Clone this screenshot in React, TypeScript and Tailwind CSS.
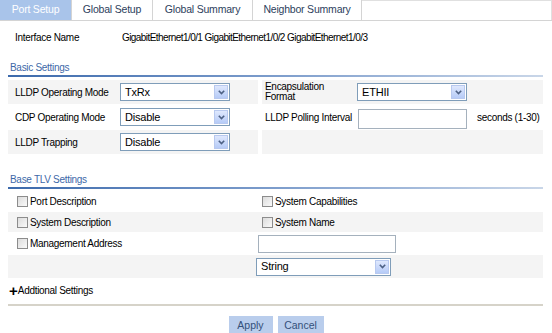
import React from "react";

const font = { fontFamily: '"Liberation Sans", Arial, sans-serif' };

function Select({ value, w }: { value: string; w: number }) {
  return (
    <div
      className="flex h-[18px] items-center border border-[#7f9db9] bg-white"
      style={{ width: w }}
    >
      <span className="flex-1 pl-[4px] text-[11px] leading-none tracking-[-0.2px] text-black">{value}</span>
      <div className="mr-[1px] flex h-[14px] w-[14px] items-center justify-center border border-[#b8c9ef] bg-gradient-to-b from-[#dfe8fd] to-[#b6cbf7]">
        <svg width="7" height="5" viewBox="0 0 7 5">
          <path d="M0.8 0.8 L3.5 3.6 L6.2 0.8" fill="none" stroke="#4d6185" strokeWidth="1.6" />
        </svg>
      </div>
    </div>
  );
}

function Check({ label }: { label: string }) {
  return (
    <div className="flex items-center">
      <div className="h-[11px] w-[11px] border border-[#8c8c8c] bg-gradient-to-br from-[#dcdcdc] to-[#fafafa]" />
      <span className="ml-[2px] text-[10px] tracking-[-0.3px] text-black">{label}</span>
    </div>
  );
}

function SectionTitle({ title }: { title: string }) {
  return (
    <div className="ml-[8px] mr-[9px]">
      <div className="pl-[2px] text-[10px] leading-[12px] tracking-[-0.3px] text-[#3d68a8]">{title}</div>
      <div className="mt-[1px] h-[2px] bg-gradient-to-r from-[#3c6aac] via-[#7d9dcc] to-[#c9d6e8]" />
    </div>
  );
}

export default function App() {
  const tabs = [
    { t: "Port Setup", w: 72 },
    { t: "Global Setup", w: 81 },
    { t: "Global Summary", w: 100 },
    { t: "Neighbor Summary", w: 109 },
  ];
  const gray = "bg-[#f4f4f4]";
  return (
    <div className="h-[333px] w-[552px] overflow-hidden bg-white text-[10px] text-black" style={font}>
      {/* tabs */}
      <div className="flex h-[21px] border-b border-[#d4d4d4]">
        {tabs.map((x, i) => (
          <div
            key={x.t}
            className={`flex items-center justify-center border-r border-[#d4d4d4] text-[10.5px] tracking-[-0.2px] ${
              i === 0 ? "bg-[#a9c4ea] text-white" : "bg-white text-[#2c3e5c]"
            }`}
            style={{ width: x.w }}
          >
            {x.t}
          </div>
        ))}
        <div className="flex-1 border-r border-t border-[#e0e0e0]" />
      </div>

      {/* interface name */}
      <div className="mt-[10px] flex h-[12px] items-center text-[10px] tracking-[-0.3px]">
        <span className="ml-[15px] w-[107px]">Interface Name</span>
        <span className="tracking-[-0.57px]">GigabitEthernet1/0/1 GigabitEthernet1/0/2 GigabitEthernet1/0/3</span>
      </div>

      <div className="mt-[19px]">
        <SectionTitle title="Basic Settings" />
      </div>

      {/* basic settings table */}
      <div className="ml-[8px] mr-[9px] mt-[3px] flex flex-col gap-[1px] text-[10px] tracking-[-0.3px]">
        <div className="flex h-[24px] gap-[4px]">
          <div className={`flex w-[250px] items-center ${gray}`}>
            <span className="w-[112px] pl-[7px]">LLDP Operating Mode</span>
            <Select value="TxRx" w={110} />
          </div>
          <div className={`flex flex-1 items-center ${gray}`}>
            <span className="w-[95px] pl-[3px] leading-[10px]">
              Encapsulation
              <br />
              Format
            </span>
            <Select value="ETHII" w={110} />
          </div>
        </div>
        <div className="flex h-[24px] gap-[4px]">
          <div className="flex w-[250px] items-center">
            <span className="w-[112px] pl-[7px]">CDP Operating Mode</span>
            <Select value="Disable" w={110} />
          </div>
          <div className="flex flex-1 items-center">
            <span className="w-[96px] pl-[3px]">LLDP Polling Interval</span>
            <div className="mt-[3px] h-[20px] w-[109px] border border-[#a5b1bd] bg-white" />
            <span className="ml-[10px]">seconds (1-30)</span>
          </div>
        </div>
        <div className="flex h-[24px] gap-[4px]">
          <div className={`flex w-[250px] items-center ${gray}`}>
            <span className="w-[112px] pl-[7px]">LLDP Trapping</span>
            <Select value="Disable" w={110} />
          </div>
          <div className={`flex-1 ${gray}`} />
        </div>
      </div>

      <div className="mt-[20px]">
        <SectionTitle title="Base TLV Settings" />
      </div>

      {/* TLV table */}
      <div className="ml-[8px] mr-[9px] mt-[2px] flex flex-col gap-[1px]">
        <div className="flex h-[20px] gap-[2px]">
          <div className="flex w-[244px] items-center pl-[9px]">
            <Check label="Port Description" />
          </div>
          <div className="flex flex-1 items-center pl-[8px]">
            <Check label="System Capabilities" />
          </div>
        </div>
        <div className={`flex h-[20px] gap-[2px] ${gray}`}>
          <div className="flex w-[244px] items-center pl-[9px]">
            <Check label="System Description" />
          </div>
          <div className="flex flex-1 items-center pl-[8px]">
            <Check label="System Name" />
          </div>
        </div>
        <div className="flex h-[21px] gap-[2px]">
          <div className="flex w-[244px] items-center pl-[9px]">
            <Check label="Management Address" />
          </div>
          <div className="flex flex-1 items-center pl-[4px]">
            <div className="h-[18px] w-[138px] border border-[#a5b1bd] bg-white" />
          </div>
        </div>
        <div className={`flex h-[23px] items-center ${gray}`}>
          <div className="ml-[248px]">
            <Select value="String" w={135} />
          </div>
        </div>
      </div>

      {/* additional */}
      <div className="ml-[9px] mt-[5px] flex h-[14px] items-center">
        <span className="text-[15px] font-bold leading-none">+</span>
        <span className="text-[10px] tracking-[-0.3px]">Addtional Settings</span>
      </div>

      <div className="ml-[8px] mr-[9px] mt-[7px] h-[2px] bg-[#d6d3c9]" />

      <div className="mt-[10px] flex justify-center gap-[5px]">
        <button className="h-[20px] w-[44px] bg-[#b9cdec] text-[10.5px] text-[#34507a]">Apply</button>
        <button className="h-[20px] w-[46px] bg-[#b9cdec] text-[10.5px] text-[#34507a]">Cancel</button>
      </div>
    </div>
  );
}
